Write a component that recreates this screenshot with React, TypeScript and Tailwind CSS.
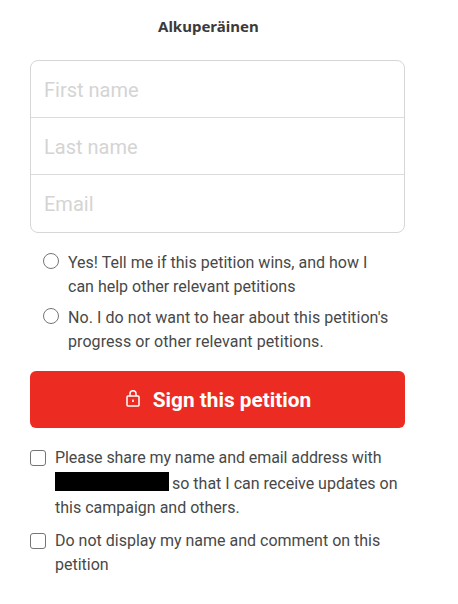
import React from "react"

const fields = ["First name", "Last name", "Email"]

function Radio({ children }: { children: React.ReactNode }) {
  return (
    <label className="flex items-start gap-[9px]">
      <span className="mt-[4px] h-[16px] w-[16px] shrink-0 rounded-full border border-[#757575] bg-white" />
      <span className="pt-[2px]">{children}</span>
    </label>
  )
}

function Check({ children }: { children: React.ReactNode }) {
  return (
    <label className="flex items-start gap-[9px]">
      <span className="mt-[4px] h-[16px] w-[16px] shrink-0 rounded-[3px] border border-[#757575] bg-white" />
      <span>{children}</span>
    </label>
  )
}

export default function App() {
  return (
    <div className="h-[604px] w-[458px] overflow-hidden bg-white font-['Roboto',sans-serif] text-[16px] leading-[24.4px] text-[#484848]">
      <div className="w-[435px] px-[30px]">
        <h2 className="pt-[16px] pl-[128px] font-['Noto_Sans',sans-serif] text-[15px] leading-[20px] font-bold text-[#3a3a3a]">
          Alkuperäinen
        </h2>

        <div className="mt-[24px] w-[375px] divide-y divide-[#dcdcdc] rounded-[8px] border border-[#d6d6d6]">
          {fields.map((field) => (
            <div key={field} className="flex h-[57px] items-center px-[13px] pt-[2px] text-[20px] text-[#d4d4d4]">
              {field}
            </div>
          ))}
        </div>

        <div className="mt-[16px] flex w-[375px] flex-col gap-[4px] pl-[13px]">
          <Radio>
            Yes! Tell me if this petition wins, and how I
            <br />
            can help other relevant petitions
          </Radio>
          <Radio>
            <span className="tracking-[0.07px]">No. I do not want to hear about this petition's</span>
            <br />
            <span className="tracking-[0.08px]">progress or other relevant petitions.</span>
          </Radio>
        </div>

        <button
          type="button"
          className="mt-[16px] flex h-[57px] w-[375px] items-center justify-center gap-[13px] rounded-[6px] bg-[#ec2c22] text-[20.8px] font-bold text-white"
        >
          <svg className="mb-[2px] ml-[2px]" width="14" height="17" viewBox="0 0 14 17" fill="none" stroke="currentColor" strokeWidth="1.5" aria-hidden="true">
            <rect x="1" y="6" width="12" height="10" rx="1" />
            <path d="M4 6V3.8a3 3 0 0 1 6 0V6" />
            <rect x="6.2" y="9.6" width="1.6" height="2.4" fill="currentColor" stroke="none" />
          </svg>
          <span className="pt-[2px]">Sign this petition</span>
        </button>

        <div className="mt-[18px] flex w-[375px] flex-col gap-[8px]">
          <Check>
            <span className="tracking-[-0.07px]">Please share my name and email address with</span>
            <br />
            <span className="mr-[3px] inline-block h-[19px] w-[114px] translate-y-[2px] bg-black" />
            so that I can receive updates on
            <br />
            this campaign and others.
          </Check>
          <Check>
            Do not display my name and comment on this
            <br />
            petition
          </Check>
        </div>
      </div>
    </div>
  )
}
